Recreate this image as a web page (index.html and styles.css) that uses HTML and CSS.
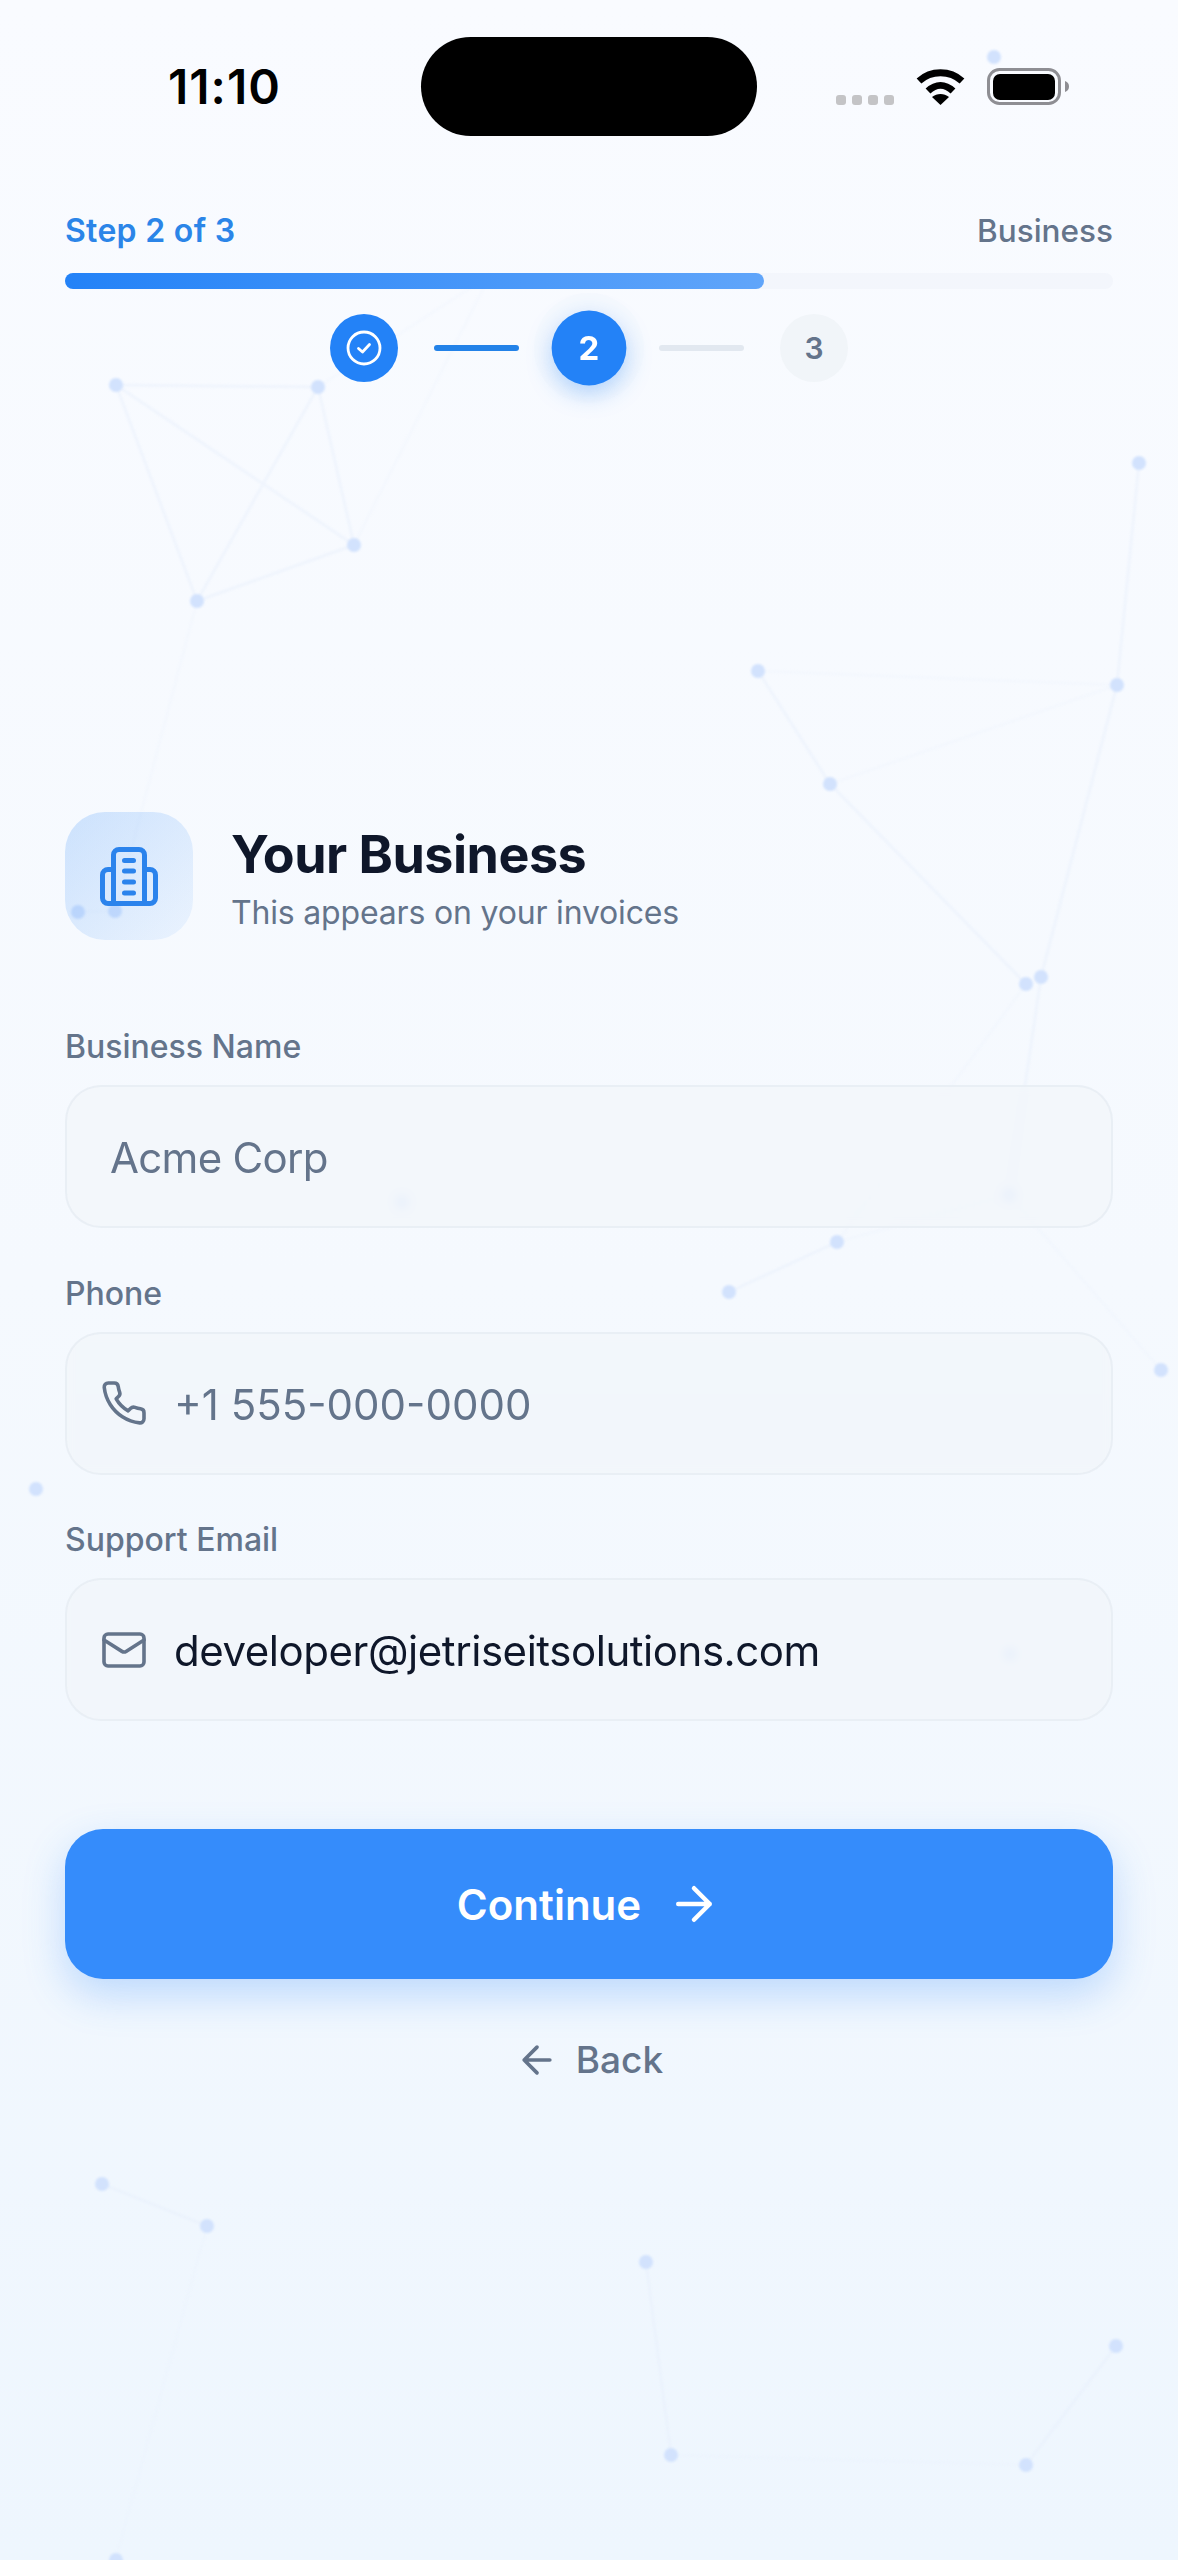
FILE: index.html
```html
<!DOCTYPE html>
<html lang="en">

<head>
    <meta charset="UTF-8">
    <meta name="viewport" content="width=device-width, initial-scale=1.0">
    <title>Your Business</title>
    <link rel="stylesheet" href="styles.css">
</head>

<body>

    <div class="screen">
        <!-- Background network -->
        <svg class="network" viewBox="0 0 1178 2560" aria-hidden="true">
            <g class="net-lines">
                <path d="M116 385L318 387M116 385L354 545M116 385L197 601M318 387L197 601M318 387L354 545M354 545L197 601" />
                <path d="M758 671L830 784M830 784L1026 984M1117 685L1139 463M1117 685L1041 977M1041 977L1009 1195M837 1242L729 1292M102 2184L207 2226M646 2262L671 2455M1026 2465L1116 2346" />
                <path class="faint" d="M197 601L115 911M318 387L490 275M354 545L490 275M78 912L115 911M830 784L1117 685M758 671L1117 685M1026 984L837 1242M837 1242L1009 1195M1009 1195L1161 1370M671 2455L1026 2465M207 2226L116 2558" />
            </g>
            <g class="net-nodes">
                <circle cx="994" cy="57" r="7" />
                <circle cx="116" cy="385" r="7" />
                <circle cx="318" cy="387" r="7" />
                <circle cx="354" cy="545" r="7" />
                <circle cx="197" cy="601" r="7" />
                <circle cx="1139" cy="463" r="7" />
                <circle cx="758" cy="671" r="7" />
                <circle cx="830" cy="784" r="7" />
                <circle cx="1117" cy="685" r="7" />
                <circle cx="1026" cy="984" r="7" />
                <circle cx="1041" cy="977" r="7" />
                <circle cx="78" cy="912" r="7" />
                <circle cx="115" cy="911" r="7" />
                <circle cx="402" cy="1202" r="7" />
                <circle cx="1009" cy="1195" r="7" />
                <circle cx="837" cy="1242" r="7" />
                <circle cx="729" cy="1292" r="7" />
                <circle cx="1161" cy="1370" r="7" />
                <circle cx="36" cy="1489" r="7" />
                <circle cx="1010" cy="1654" r="7" />
                <circle cx="102" cy="2184" r="7" />
                <circle cx="207" cy="2226" r="7" />
                <circle cx="646" cy="2262" r="7" />
                <circle cx="671" cy="2455" r="7" />
                <circle cx="1026" cy="2465" r="7" />
                <circle cx="1116" cy="2346" r="7" />
                <circle cx="116" cy="2560" r="7" />
            </g>
        </svg>

        <!-- Status bar -->
        <div class="status-bar">
            <div class="status-time">11:10</div>
            <div class="island"></div>
            <div class="status-icons">
                <div class="signal"><span></span><span></span><span></span><span></span></div>
                <svg class="wifi" viewBox="0 0 51 37">
                    <path d="M4 13C16 2 35 2 47 13" />
                    <path d="M13 23C21 15.500 30 15.500 38 23" />
                    <path class="wifi-dot" d="M25.500 37L17 29C22 25 29 25 34 29Z" />
                </svg>
                <svg class="battery" viewBox="0 0 82 37">
                    <rect class="battery-case" x="1.500" y="1.500" width="71" height="34" rx="11" />
                    <rect x="6" y="6" width="62" height="26" rx="7" />
                    <path class="battery-nub" d="M78 13C81 14 82 16 82 18.500C82 21 81 23 78 24Z" />
                </svg>
            </div>
        </div>

        <div class="content">
            <!-- Progress -->
            <div class="progress-head">
                <span class="progress-step">Step 2 of 3</span>
                <span class="progress-name">Business</span>
            </div>
            <div class="progress-track">
                <div class="progress-fill" style="width: 66.7%"></div>
            </div>

            <div class="steps">
                <div class="step step-done">
                    <svg viewBox="0 0 36 36">
                        <circle cx="18" cy="18" r="16" />
                        <path d="M12.500 18.500L16.500 22L23.500 14.500" />
                    </svg>
                </div>
                <div class="step-line step-line-done"></div>
                <div class="step step-current">2</div>
                <div class="step-line"></div>
                <div class="step">3</div>
            </div>

            <!-- Heading -->
            <div class="heading">
                <div class="heading-icon">
                    <svg viewBox="0 0 58 59">
                        <path d="M13.500 56.500V8a5.500 5.500 0 0 1 5.500-5.500h20a5.500 5.500 0 0 1 5.500 5.500v48.500" />
                        <path d="M13.500 22.500H8A5.500 5.500 0 0 0 2.500 28v23A5.500 5.500 0 0 0 8 56.500h42a5.500 5.500 0 0 0 5.500-5.500V28a5.500 5.500 0 0 0-5.500-5.500h-5.500" />
                        <path d="M24.500 13.500h9M24.500 24h9M24.500 35h9M24.500 46h9" />
                    </svg>
                </div>
                <div class="heading-text">
                    <h1>Your Business</h1>
                    <p>This appears on your invoices</p>
                </div>
            </div>

            <!-- Form -->
            <form class="order-form">
                <div class="form-group">
                    <label>Business Name</label>
                    <div class="field">
                        <span class="field-text placeholder plain">Acme Corp</span>
                    </div>
                </div>
                <div class="form-group">
                    <label>Phone</label>
                    <div class="field">
                        <svg class="field-icon" viewBox="0 0 24 24">
                            <path d="M22 16.920v3a2 2 0 0 1-2.180 2 19.790 19.790 0 0 1-8.630-3.070 19.500 19.500 0 0 1-6-6 19.790 19.790 0 0 1-3.070-8.670A2 2 0 0 1 4.110 2h3a2 2 0 0 1 2 1.720 12.840 12.840 0 0 0 .7 2.810 2 2 0 0 1-.45 2.110L8.090 9.910a16 16 0 0 0 6 6l1.270-1.270a2 2 0 0 1 2.110-.45 12.840 12.840 0 0 0 2.810.7A2 2 0 0 1 22 16.920z" />
                        </svg>
                        <span class="field-text placeholder phone">+1 555-000-0000</span>
                    </div>
                </div>
                <div class="form-group">
                    <label>Support Email</label>
                    <div class="field">
                        <svg class="field-icon" viewBox="0 0 24 24">
                            <rect x="2" y="4" width="20" height="16" rx="2" />
                            <path d="M22 7l-8.970 5.700a1.940 1.940 0 0 1-2.060 0L2 7" />
                        </svg>
                        <span class="field-text">developer@jetriseitsolutions.com</span>
                    </div>
                </div>

                <button type="button" class="submit-btn">
                    Continue
                    <svg viewBox="0 0 24 24">
                        <path d="M5 12h14M12 5l7 7-7 7" />
                    </svg>
                </button>
                <button type="button" class="back-btn">
                    <svg viewBox="0 0 24 24">
                        <path d="M19 12H5M12 19l-7-7 7-7" />
                    </svg>
                    Back
                </button>
            </form>
        </div>
    </div>

</body>

</html>
```

FILE: styles.css
```css
* {
    box-sizing: border-box;
    margin: 0;
    padding: 0;
    font-family: Inter, "Noto Sans", sans-serif;
}

body {
    background: #eef6fe;
}

.screen {
    position: relative;
    width: 1178px;
    height: 2560px;
    overflow: hidden;
    background: linear-gradient(180deg, #f9fbff 0%, #f5f9fe 50%, #eef6fe 100%);
}

/* Background network */
.network {
    position: absolute;
    top: 0;
    left: 0;
    width: 1178px;
    height: 2560px;
}

.net-lines path {
    fill: none;
    stroke: #e6eefb;
    stroke-width: 3;
    opacity: 0.45;
    filter: blur(0.8px);
}

.net-lines .faint {
    opacity: 0.18;
}

.net-nodes circle {
    fill: #d2e2fd;
    filter: blur(1px);
}

/* Status bar */
.status-bar {
    position: relative;
    display: grid;
    grid-template-columns: 1fr 336px 1fr;
    align-items: center;
    height: 136px;
    padding-top: 37px;
}

.status-time {
    padding-left: 168px;
    font-size: 48px;
    font-weight: 600;
    letter-spacing: 1px;
    color: #000;
}

.island {
    height: 99px;
    border-radius: 50px;
    background: #000;
}

.status-icons {
    display: flex;
    align-items: flex-end;
    justify-content: flex-end;
    gap: 21px;
    padding-right: 109px;
}

.signal {
    display: flex;
    gap: 6px;
}

.signal span {
    width: 10px;
    height: 10px;
    border-radius: 3px;
    background: #c4c4c6;
}

.wifi {
    width: 51px;
    height: 37px;
}

.wifi path {
    fill: none;
    stroke: #000;
    stroke-width: 7;
}

.wifi .wifi-dot {
    fill: #000;
    stroke: none;
}

.battery {
    width: 82px;
    height: 37px;
}

.battery-case {
    fill: none;
    stroke: #8e8e93;
    stroke-width: 3;
}

.battery-nub {
    fill: #8e8e93;
}

/* Main column */
.content {
    position: relative;
    padding: 0 65px;
}

.progress-head {
    display: flex;
    justify-content: space-between;
    align-items: center;
    margin-top: 74px;
    height: 40px;
    font-size: 32px;
}

.progress-step {
    font-weight: 600;
    letter-spacing: 0.3px;
    color: #2b85e8;
}

.progress-name {
    font-size: 31.500px;
    font-weight: 500;
    color: #64748b;
}

.progress-track {
    height: 16px;
    margin-top: 23px;
    border-radius: 8px;
    background: rgba(226, 232, 240, 0.2);
}

.progress-fill {
    height: 100%;
    border-radius: 8px;
    background: linear-gradient(90deg, #2382f7, #60a5fa);
}

/* Step dots */
.steps {
    display: flex;
    align-items: center;
    justify-content: center;
    gap: 36px;
    margin-top: 25px;
}

.step {
    display: flex;
    align-items: center;
    justify-content: center;
    width: 68px;
    height: 68px;
    border-radius: 50%;
    background: #f1f5f9;
    font-size: 30px;
    font-weight: 600;
    color: #64748b;
}

.step-done {
    background: #2382f7;
}

.step-done svg {
    width: 36px;
    height: 36px;
    fill: none;
    stroke: #fff;
    stroke-width: 2.800;
    stroke-linecap: round;
    stroke-linejoin: round;
}

.step-current {
    background: #2382f7;
    color: #fff;
    font-weight: 700;
    transform: scale(1.1);
    box-shadow: 0 7px 22px rgba(35, 130, 247, 0.35), 0 0 0 16px rgba(241, 245, 251, 0.35);
}

.step-line {
    width: 85px;
    height: 6px;
    border-radius: 3px;
    background: #e2e8f0;
}

.step-line-done {
    background: #2382e8;
}

/* Heading */
.heading {
    display: flex;
    align-items: center;
    gap: 38px;
    margin-top: 430px;
}

.heading-icon {
    display: flex;
    align-items: center;
    justify-content: center;
    width: 128px;
    height: 128px;
    border-radius: 40px;
    background: linear-gradient(135deg, rgba(35, 130, 247, 0.2), rgba(35, 130, 247, 0.06));
}

.heading-icon svg {
    width: 58px;
    height: 59px;
    fill: none;
    stroke: #2b83ec;
    stroke-width: 5;
    stroke-linecap: round;
    stroke-linejoin: round;
}

.heading-text {
    padding-top: 6px;
}

h1 {
    font-size: 52px;
    font-weight: 700;
    line-height: 62px;
    letter-spacing: -0.5px;
    color: #0f172a;
}

p {
    margin-top: 6px;
    font-size: 32px;
    line-height: 42px;
    letter-spacing: -0.18px;
    color: #64748b;
}

/* Form */
.order-form {
    margin-top: 87px;
}

.form-group {
    margin-bottom: 45.500px;
}

.form-group label {
    display: block;
    margin-bottom: 19px;
    font-size: 32px;
    font-weight: 500;
    line-height: 39px;
    color: #64748b;
}

.field {
    display: flex;
    align-items: center;
    gap: 26px;
    height: 143px;
    padding-left: 33px;
    border: 2px solid rgba(226, 232, 240, 0.6);
    border-radius: 36px;
    background: rgba(241, 245, 249, 0.75);
    backdrop-filter: blur(4px);
}

.field-icon {
    flex-shrink: 0;
    width: 48px;
    height: 48px;
    fill: none;
    stroke: #64748b;
    stroke-width: 1.800;
    stroke-linecap: round;
    stroke-linejoin: round;
}

.field-text {
    padding-top: 2px;
    font-size: 42px;
    letter-spacing: -0.45px;
    color: #0f172a;
}

.placeholder {
    color: #64748b;
}

.phone {
    letter-spacing: 0;
}

.plain {
    margin-left: 10px;
    letter-spacing: -0.7px;
}

.submit-btn {
    display: flex;
    align-items: center;
    justify-content: center;
    gap: 26px;
    width: 100%;
    height: 150px;
    margin-top: 108px;
    border: none;
    border-radius: 38px;
    background: #358cfb;
    box-shadow: 0 16px 40px rgba(53, 140, 251, 0.28);
    color: #fff;
    font-size: 42px;
    font-weight: 600;
}

.submit-btn svg {
    width: 54px;
    height: 54px;
    fill: none;
    stroke: #fff;
    stroke-width: 2;
    stroke-linecap: round;
    stroke-linejoin: round;
}

.back-btn {
    display: flex;
    align-items: center;
    justify-content: center;
    gap: 17px;
    width: 100%;
    margin-top: 58px;
    border: none;
    background: none;
    color: #64748b;
    font-size: 37px;
    font-weight: 500;
}

.back-btn svg {
    width: 44px;
    height: 44px;
    fill: none;
    stroke: #64748b;
    stroke-width: 2;
    stroke-linecap: round;
    stroke-linejoin: round;
}
```
